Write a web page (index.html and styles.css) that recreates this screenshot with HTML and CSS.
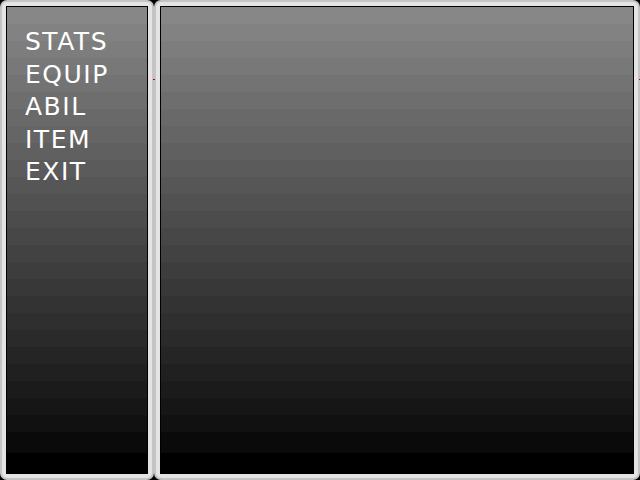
FILE: index.html
```html
<!DOCTYPE html>
<html>
<head>
<meta charset="utf-8">
<link rel="stylesheet" href="styles.css">
</head>
<body>
<div class="screen">
  <div class="panel menu-panel">
    <div class="inner">
      <ul class="menu">
        <li>STATS</li>
        <li>EQUIP</li>
        <li>ABIL</li>
        <li>ITEM</li>
        <li>EXIT</li>
      </ul>
    </div>
  </div>
  <div class="panel main-panel">
    <div class="inner"></div>
    <span class="mark mark-left"></span>
    <span class="mark mark-right"></span>
  </div>
</div>
</body>
</html>
```

FILE: styles.css
```css
html, body {
  margin: 0;
  padding: 0;
  background: #000;
}
.screen {
  width: 640px;
  height: 480px;
  display: flex;
  background: #000;
}
.panel {
  box-sizing: border-box;
  height: 480px;
  border: 2px solid #c4c4c4;
  border-radius: 7px;
  background: #e4e4e4;
  padding: 4px;
  display: flex;
  position: relative;
}
.menu-panel {
  width: 154px;
}
.main-panel {
  flex: 1;
}
.inner {
  flex: 1;
  border: 1px solid #000;
  background: linear-gradient(to bottom,
    #878787 0 17px, #828282 17px 34px, #7d7d7d 34px 51px, #787878 51px 68px,
    #737373 68px 85px, #6e6e6e 85px 102px, #696969 102px 119px, #656565 119px 136px,
    #606060 136px 153px, #5b5b5b 153px 170px, #565656 170px 187px, #515151 187px 204px,
    #4c4c4c 204px 221px, #474747 221px 238px, #424242 238px 255px, #3d3d3d 255px 272px,
    #383838 272px 289px, #333333 289px 306px, #2f2f2f 306px 323px, #2a2a2a 323px 340px,
    #252525 340px 357px, #202020 357px 374px, #1b1b1b 374px 391px, #161616 391px 408px,
    #111111 408px 425px, #0a0a0a 425px 446px, #000000 446px 100%);
}
.menu {
  list-style: none;
  margin: 0;
  padding: 19px 0 0 18px;
  font-family: "DejaVu Sans", sans-serif;
  font-size: 25px;
  line-height: 32.5px;
  color: #fff;
  letter-spacing: 1.5px;
}
.mark {
  position: absolute;
  top: 77px;
  height: 1px;
  background: #d00000;
}
.mark-left {
  left: -3px;
  width: 2px;
}
.mark-right {
  right: -2px;
  width: 1px;
}
```
